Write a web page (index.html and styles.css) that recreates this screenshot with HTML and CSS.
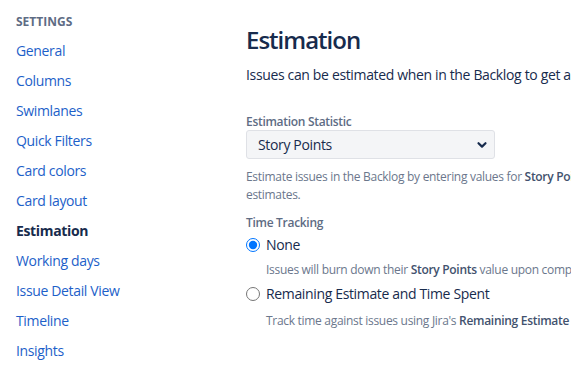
FILE: index.html
```html
<!DOCTYPE html>
<html lang="en">

<head>
    <meta charset="utf-8">
    <meta name="viewport" content="width=device-width, initial-scale=1.0">
    <title>Estimation</title>
    <link rel="stylesheet" href="styles.css">
</head>

<body>
    <div class="side">
        <h3>Settings</h3>
        <nav>
            <a href="#">General</a>
            <a href="#">Columns</a>
            <a href="#">Swimlanes</a>
            <a href="#">Quick Filters</a>
            <a href="#">Card colors</a>
            <a href="#">Card layout</a>
            <a href="#" class="valgt">Estimation</a>
            <a href="#">Working days</a>
            <a href="#">Issue Detail View</a>
            <a href="#">Timeline</a>
            <a href="#">Insights</a>
        </nav>
    </div>

    <main>
        <h1>Estimation</h1>
        <p class="intro">Issues can be estimated when in the Backlog to get an idea of how much work can be done in a sprint.</p>

        <label class="felt" for="statistik">Estimation Statistic</label>
        <div class="vaelg">
            <select id="statistik">
                <option>Story Points</option>
            </select>
            <svg width="12" height="12" viewBox="0 0 12 12"><path d="M2.5 4.2 L6 7.6 L9.5 4.2" fill="none" stroke="#172b4d" stroke-width="2.2" stroke-linecap="round" stroke-linejoin="round"/></svg>
        </div>
        <p class="hjaelp">Estimate issues in the Backlog by entering values for <b>Story Points</b> on issues, instead of time based<br>estimates.</p>

        <p class="felt">Time Tracking</p>
        <label class="radio"><input type="radio" name="tid" checked> None</label>
        <p class="hjaelp indryk">Issues will burn down their <b>Story Points</b> value upon completion.</p>
        <label class="radio"><input type="radio" name="tid"> Remaining Estimate and Time Spent</label>
        <p class="hjaelp indryk sidst">Track time against issues using Jira's <b>Remaining Estimate</b> and <b>Time Spent</b> fields.</p>
    </main>
</body>

</html>
```

FILE: styles.css
```css
* {
    box-sizing: border-box;
}

body {
    margin: 0;
    display: flex;
    font-family: "Open Sans", sans-serif;
    color: #172b4d;
    overflow: hidden;
    width: 571px;
    height: 391px;
    letter-spacing: -0.35px;
}

.side {
    width: 246px;
    flex-shrink: 0;
    padding: 14px 0 0 16px;
}

.side h3 {
    margin: 0 0 6px;
    font-size: 12px;
    line-height: 16px;
    font-weight: 700;
    text-transform: uppercase;
    color: #5e6c84;
    letter-spacing: 0;
}

nav {
    display: flex;
    flex-direction: column;
}

nav a {
    font-size: 14px;
    line-height: 30px;
    color: #1d5fc9;
    text-decoration: none;
    white-space: nowrap;
}

nav a.valgt {
    color: #172b4d;
    font-weight: 700;
}

main {
    flex: 1;
    min-width: 0;
    padding-top: 24px;
    white-space: nowrap;
}

h1 {
    margin: 0;
    font-size: 24px;
    line-height: 32px;
    font-weight: 600;
    letter-spacing: -1px;
    color: #172b4d;
}

.intro {
    margin: 9px 0 0;
    font-size: 14px;
    line-height: 20px;
}

.felt {
    display: block;
    margin: 29px 0 0;
    font-size: 12px;
    line-height: 16px;
    font-weight: 600;
    color: #5e6c84;
    letter-spacing: -0.3px;
}

.vaelg {
    position: relative;
    width: 249px;
}

select {
    appearance: none;
    width: 100%;
    height: 29px;
    padding: 0 11px;
    font-family: inherit;
    font-size: 14px;
    letter-spacing: inherit;
    color: #172b4d;
    background: #f4f5f7;
    border: 1px solid #dfe1e6;
    border-radius: 3px;
}

.vaelg svg {
    position: absolute;
    right: 7px;
    top: 9px;
}

.hjaelp {
    margin: 9px 0 0;
    font-size: 12px;
    line-height: 18px;
    color: #6b778c;
    letter-spacing: -0.3px;
}

.hjaelp b {
    font-weight: 600;
    color: #42526e;
}

p.felt {
    margin-top: 11px;
}

.radio {
    display: flex;
    align-items: center;
    gap: 6px;
    margin-top: 4px;
    font-size: 14px;
    line-height: 20px;
    color: #172b4d;
}

.radio input {
    margin: 0;
    width: 14px;
    height: 14px;
}

.indryk {
    margin: 6px 0 5px 20px;
}

.indryk.sidst {
    margin-top: 8px;
}
```
